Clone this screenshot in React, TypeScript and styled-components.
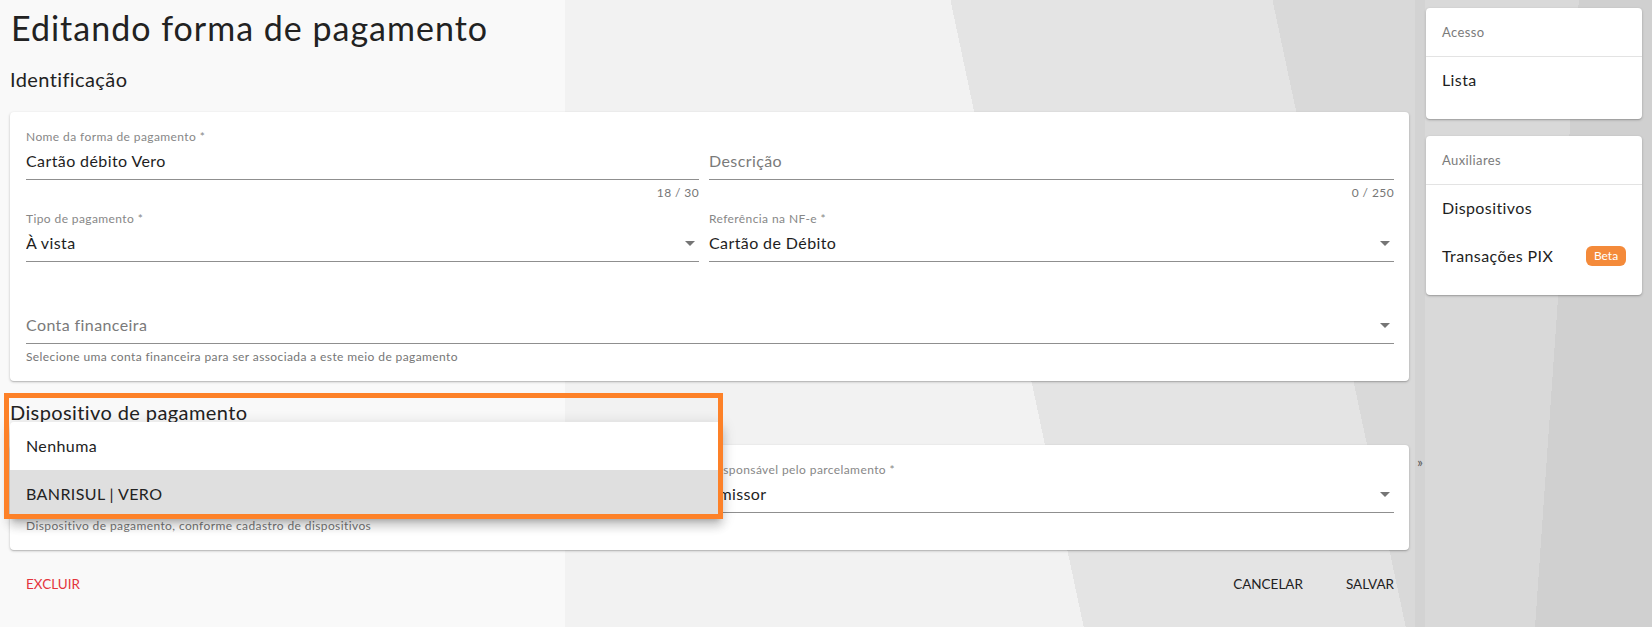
import React from "react";
import styled, { createGlobalStyle } from "styled-components";

const GlobalStyle = createGlobalStyle`
  html, body {
    margin: 0;
    padding: 0;
  }
  body {
    font-family: Lato, "Open Sans", Arial, sans-serif;
    letter-spacing: 0.4px;
    color: #212121;
  }
  * {
    box-sizing: border-box;
  }
`;

const Page = styled.div`
  display: flex;
  min-height: 100vh;
  background:
    linear-gradient(94deg, transparent 0 1575px, #d0d0d0 1575px),
    linear-gradient(78deg, transparent 0 1060px, #e4e4e4 1060px 1375px, #d9d9d9 1375px),
    linear-gradient(90deg, #f9f9f9 0 565px, #f2f2f2 565px);
`;

const Main = styled.main`
  position: relative;
  flex: 1;
  min-width: 0;
  padding: 8px 6px 0 10px;
`;

const PageTitle = styled.h1`
  margin: 0 0 2px 1px;
  font-size: 34px;
  line-height: 40px;
  font-weight: 400;
  letter-spacing: 1px;
  color: #222;
`;

const SectionTitle = styled.h2`
  margin: 19px 0 21px;
  font-size: 20px;
  line-height: 24px;
  font-weight: 400;
  color: #222;
`;

const Card = styled.section`
  position: relative;
  background: #fff;
  border-radius: 4px;
  padding: 17px 15px 17px 16px;
  box-shadow: 0 1px 3px rgba(0, 0, 0, 0.2), 0 1px 1px rgba(0, 0, 0, 0.12);
`;

const FormGrid = styled.div`
  display: grid;
  grid-template-columns: minmax(0, 673fr) minmax(0, 685fr);
  column-gap: 10px;
  row-gap: 11px;
`;

const FieldBox = styled.div<{ $wide?: boolean }>`
  position: relative;
  grid-column: ${(p) => (p.$wide ? "1 / -1" : "auto")};
`;

const Label = styled.div`
  height: 16px;
  font-size: 12px;
  line-height: 16px;
  color: #878787;
  white-space: nowrap;
`;

const Control = styled.div`
  display: flex;
  align-items: center;
  height: 31px;
  margin-top: 4px;
  padding-bottom: 6px;
  border-bottom: 1px solid #8f8f8f;
`;

const Value = styled.span<{ $placeholder?: boolean }>`
  flex: 1;
  font-size: 16px;
  line-height: 24px;
  color: ${(p) => (p.$placeholder ? "#7a7a7a" : "#1e1e1e")};
  white-space: nowrap;
  overflow: hidden;
`;

const Helper = styled.div<{ $right?: boolean }>`
  height: 14px;
  margin-top: 6px;
  font-size: 12px;
  line-height: 14px;
  color: #767676;
  text-align: ${(p) => (p.$right ? "right" : "left")};
`;

const ArrowSvg = styled.svg`
  flex: none;
  margin-right: 4px;
`;

const Menu = styled.ul`
  position: absolute;
  z-index: 5;
  left: -16px;
  top: -40px;
  width: 712px;
  margin: 0;
  padding: 0;
  list-style: none;
  background: #fff;
  border-radius: 4px;
  box-shadow: 0 5px 5px -3px rgba(0, 0, 0, 0.2), 0 8px 10px 1px rgba(0, 0, 0, 0.14),
    0 3px 14px 2px rgba(0, 0, 0, 0.12);
`;

const MenuItem = styled.li<{ $selected?: boolean }>`
  height: 48px;
  padding: 0 16px;
  font-size: 16px;
  line-height: 48px;
  color: #222;
  background: ${(p) => (p.$selected ? "#dfdfdf" : "transparent")};
`;

const Highlight = styled.div`
  position: absolute;
  z-index: 10;
  left: 4px;
  top: 393px;
  width: 719px;
  height: 126px;
  border: 5px solid #fd8128;
  pointer-events: none;
`;

const Actions = styled.div`
  display: flex;
  align-items: center;
  gap: 27px;
  margin-top: 16px;
  padding: 0 7px 0 8px;
`;

const Spacer = styled.div`
  flex: 1;
`;

const TextButton = styled.button<{ $danger?: boolean }>`
  height: 36px;
  padding: 0 8px;
  border: 0;
  background: transparent;
  font-family: inherit;
  font-size: 13.5px;
  letter-spacing: 0;
  text-transform: uppercase;
  color: ${(p) => (p.$danger ? "#e4343c" : "#222")};
  cursor: pointer;
`;

const Toggle = styled.div`
  flex: none;
  width: 10px;
  display: flex;
  justify-content: center;
  padding-top: 454px;
  background: rgba(0, 0, 0, 0.025);
  font-size: 13px;
  line-height: 16px;
  letter-spacing: 0;
  color: #555;
`;

const Sidebar = styled.aside`
  flex: none;
  width: 227px;
  display: flex;
  flex-direction: column;
  gap: 17px;
  padding: 8px 10px 0 1px;
`;

const NavCard = styled.nav`
  background: #fff;
  border-radius: 4px;
  padding-bottom: 14px;
  box-shadow: 0 1px 3px rgba(0, 0, 0, 0.2), 0 1px 1px rgba(0, 0, 0, 0.12);
`;

const NavHeader = styled.div`
  height: 49px;
  padding: 0 16px;
  font-size: 13px;
  line-height: 48px;
  color: #7b7b7b;
  border-bottom: 1px solid #e3e3e3;
`;

const NavItem = styled.div`
  display: flex;
  align-items: center;
  justify-content: space-between;
  height: 48px;
  padding: 0 16px 3px;
  font-size: 16px;
  color: #1e1e1e;
`;

const Badge = styled.span`
  width: 40px;
  height: 20px;
  border-radius: 6px;
  background: #f48a3a;
  color: #fff;
  font-size: 12px;
  line-height: 20px;
  letter-spacing: 0;
  text-align: center;
`;

const DropArrow = () => (
  <ArrowSvg width="10" height="5" viewBox="0 0 10 5">
    <path d="M0 0l5 5 5-5z" fill="#757575" />
  </ArrowSvg>
);

type FieldProps = {
  label?: string;
  value?: string;
  placeholder?: string;
  select?: boolean;
  helper?: string;
  counter?: string;
  wide?: boolean;
  children?: React.ReactNode;
};

const Field = ({ label, value, placeholder, select, helper, counter, wide, children }: FieldProps) => (
  <FieldBox $wide={wide}>
    <Label>{label}</Label>
    <Control>
      {value ? <Value>{value}</Value> : <Value $placeholder>{placeholder}</Value>}
      {select && <DropArrow />}
    </Control>
    <Helper $right={!!counter}>{counter ?? helper}</Helper>
    {children}
  </FieldBox>
);

export default function App() {
  return (
    <>
      <GlobalStyle />
      <Page>
        <Main>
          <PageTitle>Editando forma de pagamento</PageTitle>

          <SectionTitle>Identificação</SectionTitle>
          <Card>
            <FormGrid>
              <Field label="Nome da forma de pagamento *" value="Cartão débito Vero" counter="18 / 30" />
              <Field placeholder="Descrição" counter="0 / 250" />
              <Field label="Tipo de pagamento *" value="À vista" select />
              <Field label="Referência na NF-e *" value="Cartão de Débito" select />
              <Field
                wide
                placeholder="Conta financeira"
                select
                helper="Selecione uma conta financeira para ser associada a este meio de pagamento"
              />
            </FormGrid>
          </Card>

          <SectionTitle>Dispositivo de pagamento</SectionTitle>
          <Card>
            <FormGrid>
              <Field
                label="Dispositivo de pagamento *"
                value="BANRISUL | VERO"
                select
                helper="Dispositivo de pagamento, conforme cadastro de dispositivos"
              >
                <Menu>
                  <MenuItem>Nenhuma</MenuItem>
                  <MenuItem $selected>BANRISUL | VERO</MenuItem>
                </Menu>
              </Field>
              <Field label="Responsável pelo parcelamento *" value="Emissor" select />
            </FormGrid>
          </Card>

          <Actions>
            <TextButton $danger>Excluir</TextButton>
            <Spacer />
            <TextButton>Cancelar</TextButton>
            <TextButton>Salvar</TextButton>
          </Actions>

          <Highlight />
        </Main>

        <Toggle>»</Toggle>

        <Sidebar>
          <NavCard>
            <NavHeader>Acesso</NavHeader>
            <NavItem>Lista</NavItem>
          </NavCard>
          <NavCard>
            <NavHeader>Auxiliares</NavHeader>
            <NavItem>Dispositivos</NavItem>
            <NavItem>
              Transações PIX
              <Badge>Beta</Badge>
            </NavItem>
          </NavCard>
        </Sidebar>
      </Page>
    </>
  );
}
